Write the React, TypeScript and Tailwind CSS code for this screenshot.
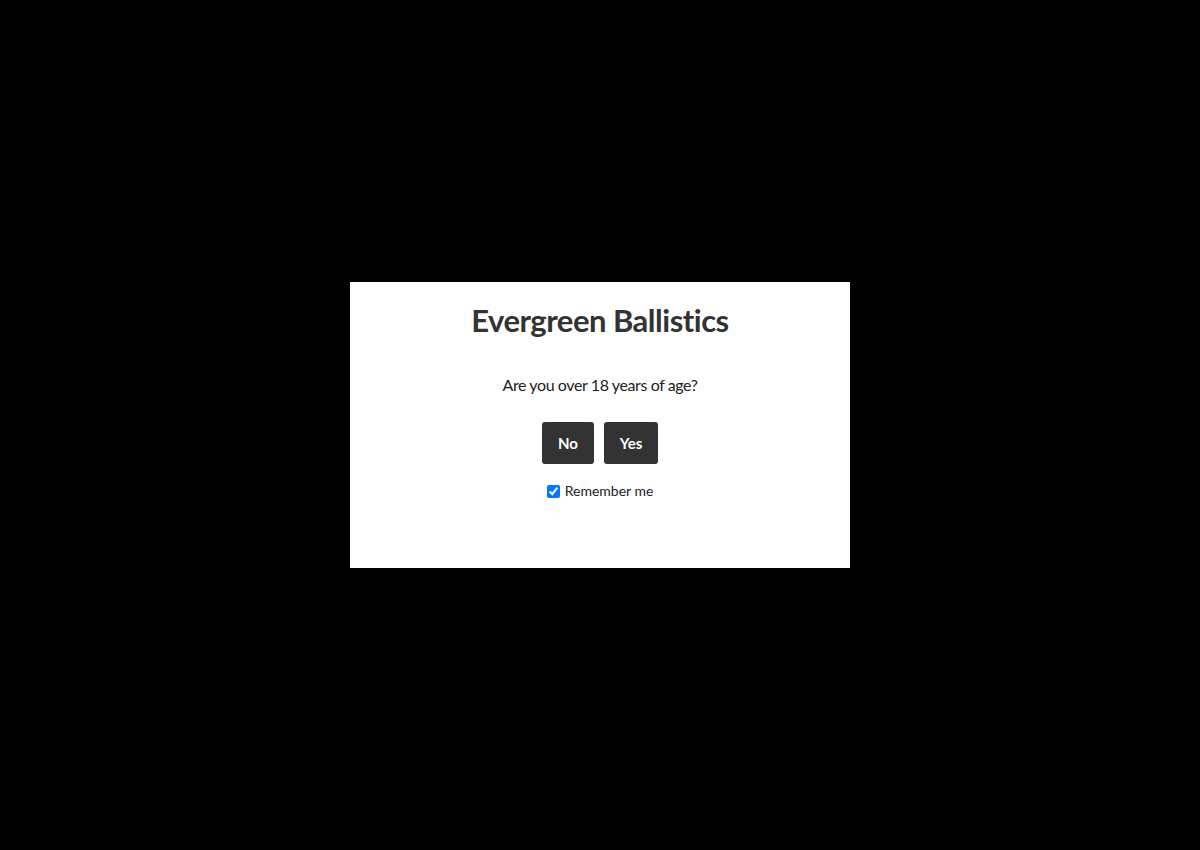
export default function App() {
  return (
    <div
      className="flex h-[850px] w-[1200px] items-start justify-center bg-black"
      style={{ fontFamily: 'Lato, "Noto Sans", sans-serif' }}
    >
      <div className="mt-[282px] flex h-[286px] w-[500px] flex-col items-center bg-white pt-[18px]">
        <h1 className="text-[31px] font-bold leading-[40px] tracking-[-0.5px] text-[#333]">
          Evergreen Ballistics
        </h1>
        <p className="mt-[35px] text-[16px] leading-[20px] tracking-[-0.4px] text-[#222]">
          Are you over 18 years of age?
        </p>
        <div className="mt-[27px] flex gap-[10px]">
          <button className="h-[42px] w-[52px] rounded-[3px] bg-[#333] text-[15px] font-bold text-white">
            No
          </button>
          <button className="h-[42px] w-[54px] rounded-[3px] bg-[#333] text-[15px] font-bold text-white">
            Yes
          </button>
        </div>
        <label className="mt-[18px] flex items-center gap-[5px] text-[14px] leading-[18px] text-[#222]">
          <input type="checkbox" defaultChecked className="m-0 h-[13px] w-[13px] accent-[#0075ff]" />
          Remember me
        </label>
      </div>
    </div>
  );
}
